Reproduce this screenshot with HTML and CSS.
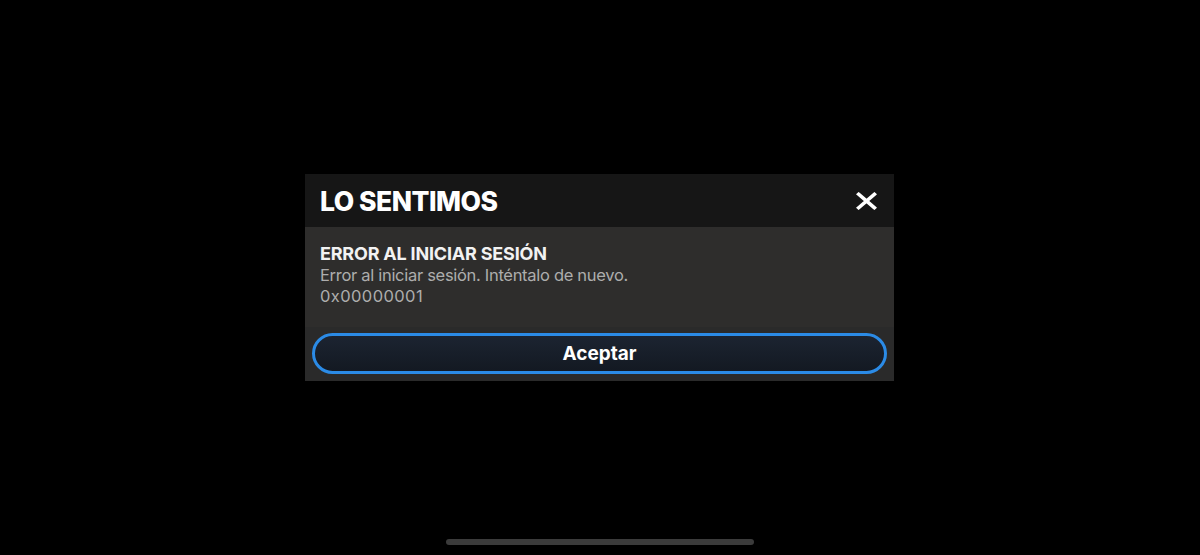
FILE: index.html
```html
<!DOCTYPE html>
<html lang="es">
<head>
<meta charset="utf-8">
<link rel="stylesheet" href="styles.css">
</head>
<body>
<div class="screen">
  <div class="dialog">
    <div class="dialog-header">
      <h1 class="dialog-title">LO SENTIMOS</h1>
      <button class="close-btn" aria-label="Cerrar">
        <svg viewBox="0 0 20 20" preserveAspectRatio="none"><path d="M2.5 2.5 L17.5 17.5 M17.5 2.5 L2.5 17.5" stroke="#fff" stroke-width="3.6" stroke-linecap="square" fill="none"/></svg>
      </button>
    </div>
    <div class="dialog-body">
      <h2 class="error-title">ERROR AL INICIAR SESIÓN</h2>
      <p class="error-text">Error al iniciar sesión. Inténtalo de nuevo.</p>
      <p class="error-text error-code">0x00000001</p>
    </div>
    <div class="dialog-footer">
      <button class="accept-btn">Aceptar</button>
    </div>
  </div>
  <div class="home-indicator"></div>
</div>
</body>
</html>
```
FILE: styles.css
```css
* { box-sizing: border-box; }
html, body { margin: 0; padding: 0; background: #000; }
body { font-family: Inter, "Noto Sans", sans-serif; }
.screen {
  position: relative;
  width: 1200px;
  height: 555px;
  display: flex;
  align-items: center;
  justify-content: center;
  padding-right: 1px;
}
.dialog {
  width: 589px;
  display: flex;
  flex-direction: column;
  background: #2e2d2c;
}
.dialog-header {
  height: 53px;
  background: #161616;
  display: flex;
  align-items: center;
  justify-content: space-between;
  padding: 0 17px 0 15px;
}
.dialog-title {
  margin: 0;
  color: #fff;
  font-size: 26.5px;
  font-weight: 800;
  letter-spacing: -0.5px;
  line-height: 1;
  padding-top: 1px;
}
.close-btn {
  border: 0;
  background: none;
  padding: 0;
  width: 22px;
  height: 22px;
  display: flex;
  align-items: center;
  justify-content: center;
}
.close-btn svg { width: 21px; height: 18px; }
.dialog-body {
  padding: 16px 15px 20px;
  height: 100px;
}
.error-title {
  margin: 0;
  color: #f2f2f2;
  font-size: 18px;
  font-weight: 700;
  line-height: 22px;
  letter-spacing: -0.2px;
}
.error-text {
  margin: 0;
  color: #adadad;
  font-size: 16.5px;
  font-weight: 400;
  line-height: 21px;
  letter-spacing: -0.3px;
}
.error-code {
  letter-spacing: 0.4px;
}
.dialog-footer {
  background: #2a2a2a;
  padding: 6px 7px 7px;
}
.accept-btn {
  width: 100%;
  height: 41px;
  border: 3px solid #2b8be6;
  border-radius: 21px;
  background: linear-gradient(180deg, #1c2431 0%, #131922 100%);
  color: #fff;
  font-family: Inter, "Noto Sans", sans-serif;
  font-size: 19px;
  font-weight: 700;
  padding: 0;
}
.home-indicator {
  position: absolute;
  left: 446px;
  bottom: 10px;
  width: 308px;
  height: 6px;
  border-radius: 3px;
  background: #3b3b3b;
}
```
